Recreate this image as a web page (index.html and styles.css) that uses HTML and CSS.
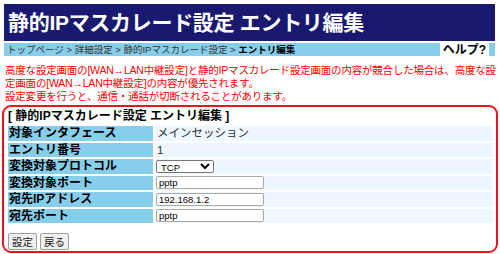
FILE: index.html
```html
<!DOCTYPE html>
<html lang="ja">
<head>
    <meta charset="UTF-8">
    <title>静的IPマスカレード設定 エントリ編集</title>
    <link rel="stylesheet" href="styles.css">
</head>
<body>
    <div class="header">
        <h1>静的IPマスカレード設定 エントリ編集</h1>
    </div>

    <div class="crumbs">
        <div class="path">トップページ &gt; 詳細設定 &gt; 静的IPマスカレード設定 &gt; <b>エントリ編集</b></div>
        <div class="help">ヘルプ?</div>
        <div class="edge"></div>
    </div>

    <p class="warn">
        高度な設定画面の[WAN→LAN中継設定]と静的IPマスカレード設定画面の内容が競合した場合は、高度な設定画面の[WAN→LAN中継設定]の内容が優先されます。<br>
        設定変更を行うと、通信・通話が切断されることがあります。
    </p>

    <div class="panel">
        <div class="panel-title">[ 静的IPマスカレード設定 エントリ編集 ]</div>
        <table class="form">
            <tr>
                <th>対象インタフェース</th>
                <td class="plain">メインセッション</td>
            </tr>
            <tr>
                <th>エントリ番号</th>
                <td class="plain">1</td>
            </tr>
            <tr>
                <th>変換対象プロトコル</th>
                <td>
                    <select class="proto">
                        <option>TCP</option>
                        <option>UDP</option>
                    </select>
                </td>
            </tr>
            <tr>
                <th>変換対象ポート</th>
                <td><input type="text" value="pptp"></td>
            </tr>
            <tr>
                <th>宛先IPアドレス</th>
                <td><input type="text" value="192.168.1.2"></td>
            </tr>
            <tr>
                <th>宛先ポート</th>
                <td><input type="text" value="pptp"></td>
            </tr>
        </table>
        <div class="actions">
            <button>設定</button>
            <button>戻る</button>
        </div>
    </div>
</body>
</html>
```

FILE: styles.css
```css
body {
    margin: 4px 2px;
    font-family: "Liberation Sans", "Noto Sans CJK JP", sans-serif;
    font-size: 11px;
    line-height: 13px;
    color: #000;
    background: #fff;
}

.header {
    background-color: #191970;
    margin: 0 3px 0 2px;
    height: 37px;
    display: flex;
    align-items: center;
}

.header h1 {
    margin: 0 0 0 4px;
    color: #fff;
    font-size: 21px;
    line-height: 26px;
    font-weight: bold;
    letter-spacing: -0.3px;
}

.crumbs {
    display: flex;
    margin: 2px 3px 0 2px;
    height: 13px;
}

.path {
    flex: 1;
    background-color: #87ceeb;
    color: #333;
    font-size: 9.5px;
    line-height: 13px;
    padding-left: 3px;
    white-space: nowrap;
}

.path b {
    color: #000;
}

.help {
    width: 49px;
    text-align: center;
    font-weight: bold;
    font-size: 12px;
    line-height: 14px;
    background: #fff;
}

.edge {
    width: 6px;
    background-color: #87ceeb;
}

.warn {
    margin: 8px 0 0 3px;
    color: #f00;
    font-size: 10.5px;
    line-height: 13px;
    letter-spacing: -0.2px;
}

.panel {
    margin-top: 2px;
    border: 2px solid #e8141e;
    border-radius: 9px;
    padding: 3px 1px 3px 2px;
    height: 138px;
}

.panel-title {
    font-weight: bold;
    font-size: 12px;
    line-height: 13px;
    padding-left: 2px;
}

.form {
    width: 100%;
    border-collapse: separate;
    border-spacing: 2px;
    margin-top: 1px;
}

.form th {
    width: 144px;
    background-color: #87ceeb;
    text-align: left;
    font-size: 12px;
    line-height: 14px;
    font-weight: bold;
    height: 14.5px;
    padding: 0 0 0 1px;
    white-space: nowrap;
}

.form td {
    background-color: #eef6ff;
    padding: 0 0 0 1px;
    height: 14.5px;
    line-height: 14px;
}

.form td.plain {
    color: #333;
    font-size: 11.5px;
    padding-left: 2px;
}

.form input {
    box-sizing: border-box;
    display: block;
    width: 108px;
    height: 13px;
    border: 1px solid #a9a9a9;
    border-radius: 2px;
    padding: 0 2px;
    font-family: "Liberation Sans", sans-serif;
    font-size: 9.5px;
    color: #000;
    margin: 0;
}

.proto {
    box-sizing: border-box;
    display: block;
    width: 58px;
    height: 13px;
    font-family: "Liberation Sans", sans-serif;
    font-size: 9.5px;
    padding: 0;
    margin: 0;
    border: 1px solid #767676;
    border-radius: 2px;
    background: #fff;
}

.actions {
    margin: 8px 0 0 2px;
    display: flex;
    gap: 3px;
}

.actions button {
    font-family: "Liberation Sans", "Noto Sans CJK JP", sans-serif;
    font-size: 10.5px;
    line-height: 12px;
    padding: 0 3px;
    height: 17px;
    border: 1px solid #a0a0a0;
    border-radius: 2px;
    background: #f0f0f0;
    color: #222;
}
```
